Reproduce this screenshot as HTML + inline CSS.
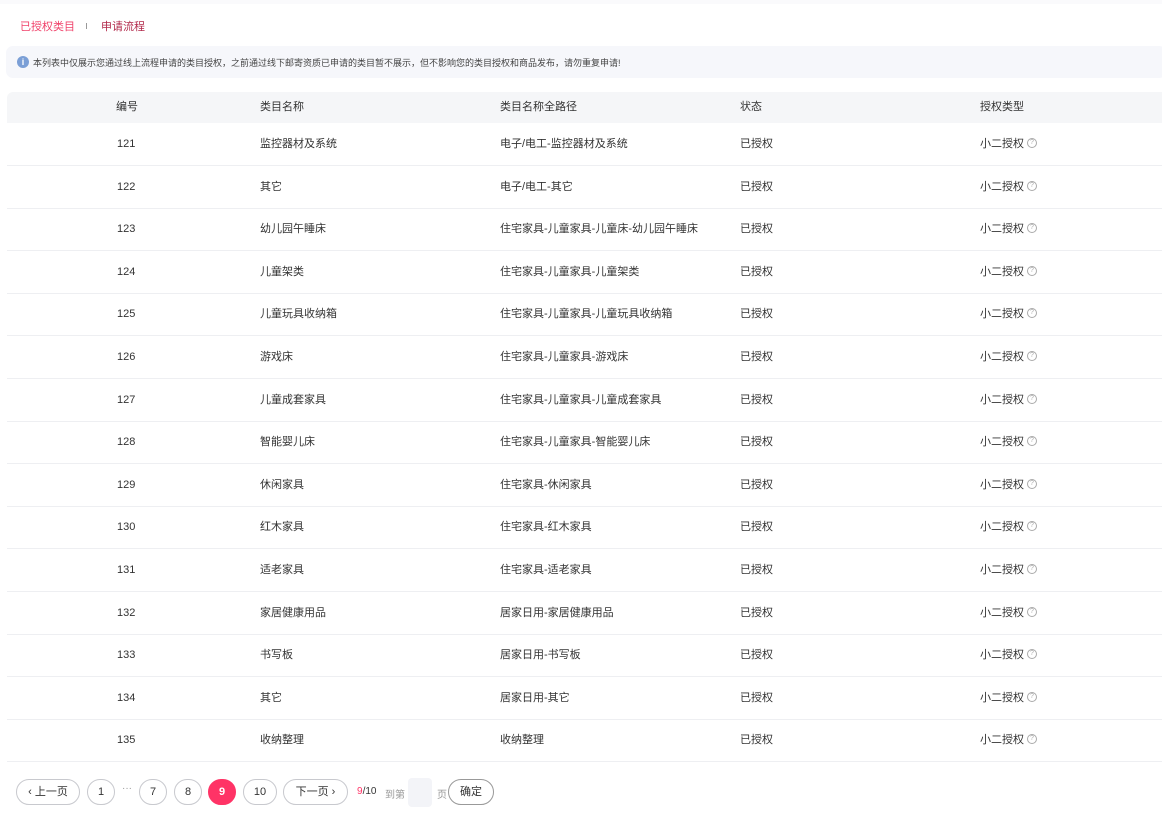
<!DOCTYPE html>
<html><head><meta charset="utf-8"><style>
*{margin:0;padding:0;box-sizing:border-box}
body{width:1162px;height:814px;background:#fff;font-family:"Liberation Sans","Noto Sans CJK SC",sans-serif;font-size:11px;color:#333;position:relative;overflow:hidden}
.a{position:absolute;white-space:nowrap}
.top{left:0;top:0;width:1162px;height:4px;background:#fafafc}
.tab1{left:20px;top:18px;color:#f0426a;font-size:11px}
.sep{left:86px;top:23px;width:1px;height:6px;background:#999}
.tab2{left:101px;top:18px;color:#b2294b;font-size:11px}
.notice{left:6px;top:46px;width:1160px;height:32px;background:#f6f7fb;border-radius:7px}
.info{left:17px;top:56px;width:12px;height:12px;border-radius:50%;background:#7b9fd6;color:#fff;font-size:9px;font-weight:bold;text-align:center;line-height:12px}
.ntext{left:33px;top:56px;font-size:9px;color:#444}
.head{left:7px;top:92px;width:1160px;height:31px;background:#f5f6f8;border-radius:6px 0 0 0}
.row{position:absolute;left:7px;width:1160px;height:43px;border-bottom:1px solid #eeeff2}
.c{position:absolute;top:0;line-height:42px;white-space:nowrap}
.hc{position:absolute;top:92px;line-height:31px;white-space:nowrap}
.q{display:inline-block;width:10px;height:10px;border:1px solid #aaa;border-radius:50%;font-size:7px;line-height:8px;text-align:center;color:#aaa;vertical-align:middle;margin-left:3px;margin-top:-2px}
.btn{position:absolute;top:779px;height:26px;border:1px solid #c8c9ce;border-radius:13px;text-align:center;line-height:24px;font-size:11px;color:#333;background:#fff}
</style></head><body>
<div class="a top"></div>
<div class="a tab1">已授权类目</div><div class="a sep"></div><div class="a tab2">申请流程</div>
<div class="a notice"></div>
<div class="a info">i</div>
<div class="a ntext">本列表中仅展示您通过线上流程申请的类目授权，之前通过线下邮寄资质已申请的类目暂不展示，但不影响您的类目授权和商品发布，请勿重复申请!</div>
<div class="a head"></div>
<div class="hc" style="left:116px">编号</div>
<div class="hc" style="left:260px">类目名称</div>
<div class="hc" style="left:500px">类目名称全路径</div>
<div class="hc" style="left:740px">状态</div>
<div class="hc" style="left:980px">授权类型</div>

<div class="row" style="top:123px"><div class="c" style="left:110px">121</div><div class="c" style="left:253px">监控器材及系统</div><div class="c" style="left:493px">电子/电工-监控器材及系统</div><div class="c" style="left:733px">已授权</div><div class="c" style="left:973px">小二授权<span class="q">?</span></div></div>
<div class="row" style="top:165.6px"><div class="c" style="left:110px">122</div><div class="c" style="left:253px">其它</div><div class="c" style="left:493px">电子/电工-其它</div><div class="c" style="left:733px">已授权</div><div class="c" style="left:973px">小二授权<span class="q">?</span></div></div>
<div class="row" style="top:208.2px"><div class="c" style="left:110px">123</div><div class="c" style="left:253px">幼儿园午睡床</div><div class="c" style="left:493px">住宅家具-儿童家具-儿童床-幼儿园午睡床</div><div class="c" style="left:733px">已授权</div><div class="c" style="left:973px">小二授权<span class="q">?</span></div></div>
<div class="row" style="top:250.8px"><div class="c" style="left:110px">124</div><div class="c" style="left:253px">儿童架类</div><div class="c" style="left:493px">住宅家具-儿童家具-儿童架类</div><div class="c" style="left:733px">已授权</div><div class="c" style="left:973px">小二授权<span class="q">?</span></div></div>
<div class="row" style="top:293.4px"><div class="c" style="left:110px">125</div><div class="c" style="left:253px">儿童玩具收纳箱</div><div class="c" style="left:493px">住宅家具-儿童家具-儿童玩具收纳箱</div><div class="c" style="left:733px">已授权</div><div class="c" style="left:973px">小二授权<span class="q">?</span></div></div>
<div class="row" style="top:336px"><div class="c" style="left:110px">126</div><div class="c" style="left:253px">游戏床</div><div class="c" style="left:493px">住宅家具-儿童家具-游戏床</div><div class="c" style="left:733px">已授权</div><div class="c" style="left:973px">小二授权<span class="q">?</span></div></div>
<div class="row" style="top:378.6px"><div class="c" style="left:110px">127</div><div class="c" style="left:253px">儿童成套家具</div><div class="c" style="left:493px">住宅家具-儿童家具-儿童成套家具</div><div class="c" style="left:733px">已授权</div><div class="c" style="left:973px">小二授权<span class="q">?</span></div></div>
<div class="row" style="top:421.2px"><div class="c" style="left:110px">128</div><div class="c" style="left:253px">智能婴儿床</div><div class="c" style="left:493px">住宅家具-儿童家具-智能婴儿床</div><div class="c" style="left:733px">已授权</div><div class="c" style="left:973px">小二授权<span class="q">?</span></div></div>
<div class="row" style="top:463.8px"><div class="c" style="left:110px">129</div><div class="c" style="left:253px">休闲家具</div><div class="c" style="left:493px">住宅家具-休闲家具</div><div class="c" style="left:733px">已授权</div><div class="c" style="left:973px">小二授权<span class="q">?</span></div></div>
<div class="row" style="top:506.4px"><div class="c" style="left:110px">130</div><div class="c" style="left:253px">红木家具</div><div class="c" style="left:493px">住宅家具-红木家具</div><div class="c" style="left:733px">已授权</div><div class="c" style="left:973px">小二授权<span class="q">?</span></div></div>
<div class="row" style="top:549px"><div class="c" style="left:110px">131</div><div class="c" style="left:253px">适老家具</div><div class="c" style="left:493px">住宅家具-适老家具</div><div class="c" style="left:733px">已授权</div><div class="c" style="left:973px">小二授权<span class="q">?</span></div></div>
<div class="row" style="top:591.6px"><div class="c" style="left:110px">132</div><div class="c" style="left:253px">家居健康用品</div><div class="c" style="left:493px">居家日用-家居健康用品</div><div class="c" style="left:733px">已授权</div><div class="c" style="left:973px">小二授权<span class="q">?</span></div></div>
<div class="row" style="top:634.2px"><div class="c" style="left:110px">133</div><div class="c" style="left:253px">书写板</div><div class="c" style="left:493px">居家日用-书写板</div><div class="c" style="left:733px">已授权</div><div class="c" style="left:973px">小二授权<span class="q">?</span></div></div>
<div class="row" style="top:676.8px"><div class="c" style="left:110px">134</div><div class="c" style="left:253px">其它</div><div class="c" style="left:493px">居家日用-其它</div><div class="c" style="left:733px">已授权</div><div class="c" style="left:973px">小二授权<span class="q">?</span></div></div>
<div class="row" style="top:719.4px"><div class="c" style="left:110px">135</div><div class="c" style="left:253px">收纳整理</div><div class="c" style="left:493px">收纳整理</div><div class="c" style="left:733px">已授权</div><div class="c" style="left:973px">小二授权<span class="q">?</span></div></div>

<div class="btn" style="left:16px;width:64px">‹ 上一页</div>
<div class="btn" style="left:87px;width:28px">1</div>
<div class="a" style="left:122px;top:783px;color:#999;font-size:10px">···</div>
<div class="btn" style="left:139px;width:28px">7</div>
<div class="btn" style="left:174px;width:28px">8</div>
<div class="btn" style="left:208px;width:28px;background:#ff3366;border-color:#ff3366;color:#fff;font-weight:bold">9</div>
<div class="btn" style="left:243px;width:34px">10</div>
<div class="btn" style="left:283px;width:65px">下一页 ›</div>
<div class="a" style="left:357px;top:786px;font-size:10px"><span style="color:#ff3366">9</span>/10</div>
<div class="a" style="left:385px;top:786px;font-size:10px;color:#999">到第</div>
<div class="a" style="left:408px;top:778px;width:24px;height:29px;background:#f3f4f8;border-radius:4px"></div>
<div class="a" style="left:437px;top:786px;font-size:10px;color:#999">页</div>
<div class="btn" style="left:448px;width:46px;border-color:#999">确定</div>
</body></html>
